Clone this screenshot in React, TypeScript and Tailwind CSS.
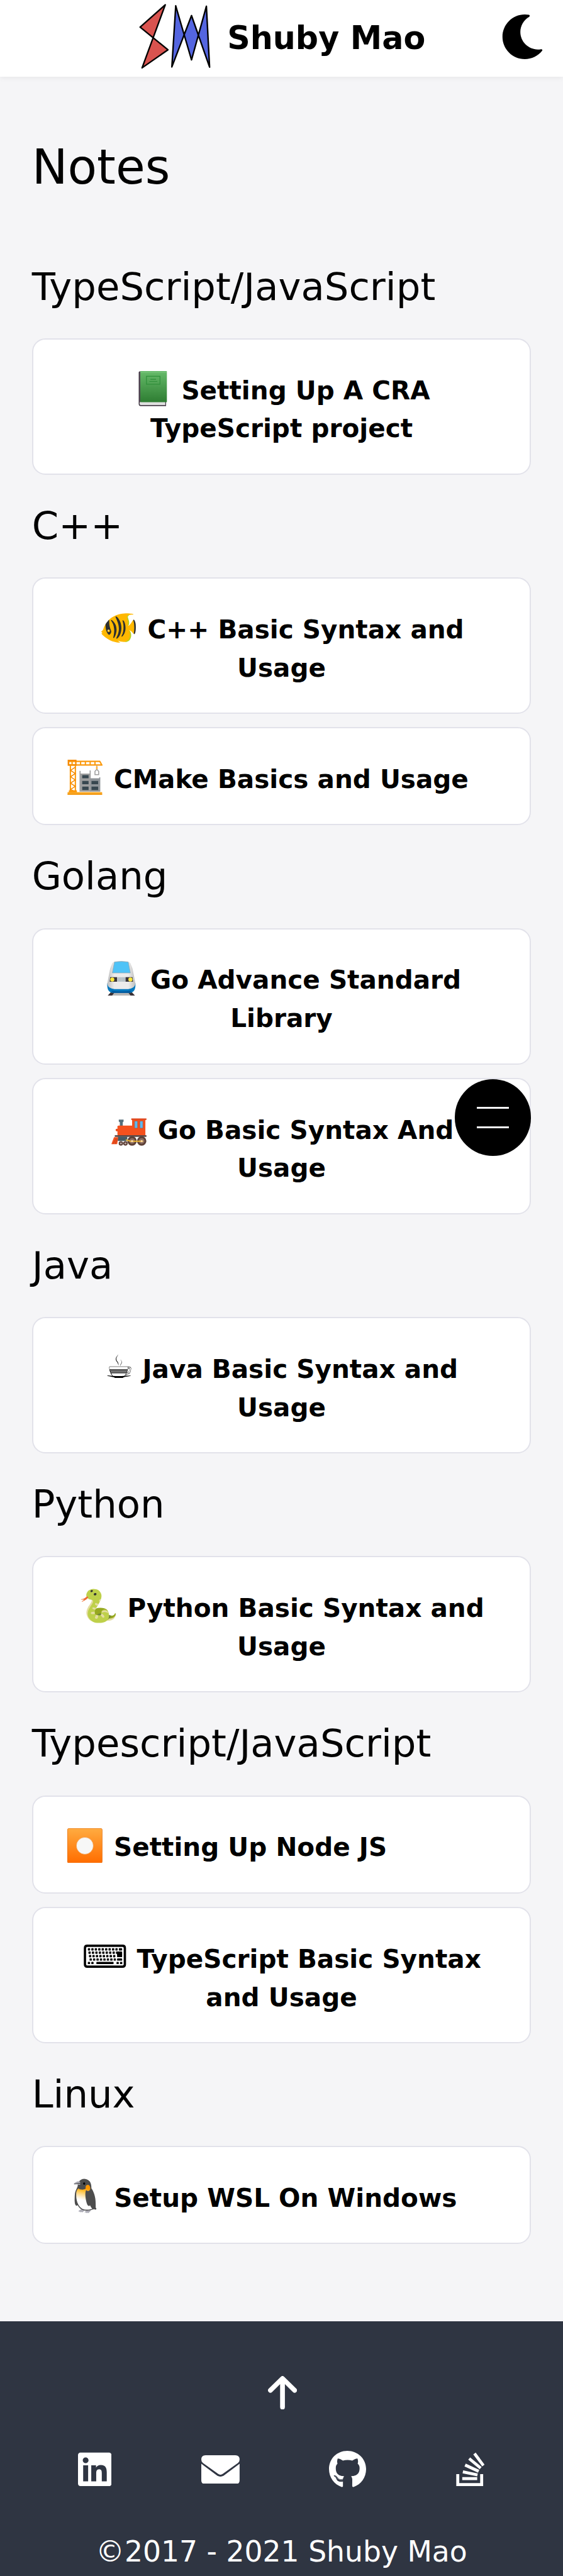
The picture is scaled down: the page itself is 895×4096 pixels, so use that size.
import type { ReactNode } from "react";
import { FaGithub, FaLinkedin, FaMoon, FaStackOverflow } from "react-icons/fa";

function Glyph({ children }: { children: ReactNode }) {
  return <span className="text-[50.7px] leading-[0]">{children}</span>;
}

function Pictogram({ children }: { children: ReactNode }) {
  return (
    <svg viewBox="0 0 66 66" className="mx-[3.6px] -mt-[20px] inline-block size-[55.8px] align-[-11px]">
      {children}
    </svg>
  );
}

function BookIcon() {
  return (
    <Pictogram>
      <defs>
        <linearGradient id="book" x1="0" y1="0" x2="0" y2="1">
          <stop offset="0" stopColor="#66bb6a" />
          <stop offset="1" stopColor="#2e7d32" />
        </linearGradient>
      </defs>
      <path d="M8 0.5H10V65.5H9Q6.5 65 6.5 62V2.5Q6.5 1 8 0.5Z" fill="#4a404c" />
      <path d="M8 58H58V65.8H9.5Q7 65 7.5 61Z" fill="#4a404c" />
      <path d="M9 58H56.5V64H9.8Q8 63 8.2 60.5Z" fill="#e0e0e0" />
      <rect x="9.5" y="0" width="50" height="58.5" rx="0.8" fill="url(#book)" />
      <path d="M10 2.5H59" stroke="#8bcf8e" strokeWidth="0.8" />
      <rect x="21" y="9.8" width="25.5" height="15" fill="none" stroke="#2f8f3a" strokeWidth="1.4" />
      <path d="M28.5 15.5H39M26.5 19.5H41.5" stroke="#2f8f3a" strokeWidth="1.4" />
    </Pictogram>
  );
}

function CraneIcon() {
  return (
    <Pictogram>
      <path d="M23 21H25V26H42V20H44V60H23Z" fill="#9e9e9e" />
      <path d="M43 35H60V33H62V60H43Z" fill="#8f9498" />
      <path d="M28 29H40V35H28ZM28 40H40V46H28ZM45.500 40H58V46H45.500ZM28 50.500H40V57H28ZM45.500 50.500H58V57H45.500Z" fill="#37474f" />
      <path d="M55.500 11V16M55.500 18L52 22V28H59V22L55.500 18" fill="none" stroke="#9e9e9e" strokeWidth="1.800" />
      <path d="M55.500 13V18" stroke="#fbb03b" strokeWidth="3" />
      <path d="M2.500 3H61L65 10H2.500Z" fill="#fff" stroke="#fb9a0e" strokeWidth="2.600" strokeLinejoin="round" />
      <path d="M2 1.300H16V10H2Z" fill="none" stroke="#f58a00" strokeWidth="2.600" />
      <path d="M9 3V10M25 3V10M34 3V10M43 3V10M52 3V10" stroke="#fb9a0e" strokeWidth="2.400" />
      <path d="M5.800 11V60M15.200 11V60" stroke="#fb9a0e" strokeWidth="2.400" />
      <path d="M15 14L6 20L15 26L6 32L15 38L6 44L15 50L6 56L15 60" fill="none" stroke="#f58a00" strokeWidth="1.800" />
      <path d="M0.500 61H65.500V66H0.500Z" fill="#f9a825" />
      <path d="M3 57.500H18V61.500H3Z" fill="#fb9a0e" />
      <path d="M0.500 65H65.500" stroke="#ef8e00" strokeWidth="1.500" />
    </Pictogram>
  );
}

function TrainIcon() {
  return (
    <Pictogram>
      <defs>
        <linearGradient id="train" x1="0" y1="0" x2="1" y2="0">
          <stop offset="0" stopColor="#bdbdbd" />
          <stop offset="0.250" stopColor="#ececec" />
          <stop offset="0.750" stopColor="#ececec" />
          <stop offset="1" stopColor="#bdbdbd" />
        </linearGradient>
      </defs>
      <path d="M16 58H50L58 66H8Z" fill="#b5b5b5" />
      <path d="M14 58H21L15 66H6.500ZM45 58H52L59.500 66H51Z" fill="#3a3136" />
      <path d="M6.500 42Q5.500 60 18 60H48Q60.500 60 59.500 42Z" fill="#0277bd" />
      <path d="M14 56Q33 59 52 56Q50 60 46 60H20Q16 60 14 56Z" fill="#01579b" />
      <path d="M16 4Q18 0 33 0Q48 0 50 4Q55 14 56 24L59.500 43Q58 52 46 53H20Q8 52 6.500 43L10 24Q11 14 16 4Z" fill="url(#train)" />
      <path d="M20 2Q33 -0.500 46 2L50 22.500H16Z" fill="#4fc3f7" />
      <path d="M20 2Q33 -0.500 46 2L50 22.500H16Z" fill="none" stroke="#90a4ae" strokeWidth="0.900" />
      <path d="M12 30.500H25V39H11ZM41 30.500H54L55 39H41Z" fill="#37323a" />
      <path d="M27 30.500V39M29.500 30.500V39M32 30.500V39M34.500 30.500V39M37 30.500V39M39.500 30.500V39" stroke="#78909c" strokeWidth="1.100" />
      <circle cx="16" cy="34.800" r="3.800" fill="#ffeb3b" />
      <circle cx="50" cy="34.800" r="3.800" fill="#ffeb3b" />
    </Pictogram>
  );
}

function LocomotiveIcon() {
  return (
    <Pictogram>
      <path d="M14 17H23V20.500L21.500 22V29H16V22L14 20.500Z" fill="#546e7a" />
      <circle cx="10.500" cy="36.500" r="2.500" fill="#e64a19" />
      <rect x="11.500" y="28" width="29" height="19" rx="2" fill="#f4511e" />
      <path d="M39 17H64V47H39Z" fill="#f4511e" />
      <path d="M37.500 14.700H66V17.500H37.500Z" fill="#dd3f14" />
      <path d="M43.500 19.500H49.500V33H43.500ZM53.500 19.500H59.500V33H53.500Z" fill="#5bb8f0" stroke="#b9502f" strokeWidth="0.900" />
      <path d="M6.500 46H66V49.500H6.500Z" fill="#5d4a47" />
      <path d="M12 49H30V57H12Z" fill="#455a64" />
      <path d="M5 50H13L11 63H0Z" fill="#f4511e" />
      <path d="M3 63L9 52M7 63L11 53" stroke="#b93814" strokeWidth="1" />
      <circle cx="39" cy="57" r="8.800" fill="#5d4037" />
      <circle cx="57" cy="57" r="8.800" fill="#5d4037" />
      <circle cx="39" cy="57" r="5.300" fill="#8d6e63" />
      <circle cx="57" cy="57" r="5.300" fill="#8d6e63" />
      <circle cx="18" cy="61.600" r="4.200" fill="#5d4037" />
      <circle cx="26.500" cy="61.600" r="4.200" fill="#5d4037" />
      <circle cx="18" cy="61.600" r="1.800" fill="#bcaaa4" />
      <circle cx="26.500" cy="61.600" r="1.800" fill="#bcaaa4" />
      <path d="M28 55L36 57.500H59" fill="none" stroke="#fbc02d" strokeWidth="2" strokeLinecap="round" />
      <circle cx="39" cy="57.300" r="2" fill="#ffd9a0" />
      <circle cx="57" cy="57.300" r="2" fill="#ffd9a0" />
    </Pictogram>
  );
}

function RecordIcon() {
  return (
    <Pictogram>
      <defs>
        <linearGradient id="record" x1="0" y1="0" x2="0" y2="1">
          <stop offset="0" stopColor="#ffab40" />
          <stop offset="1" stopColor="#ff6d00" />
        </linearGradient>
      </defs>
      <rect width="66" height="66" rx="3.500" fill="#e0690c" />
      <rect x="0.700" y="0.700" width="64.600" height="64" rx="3" fill="url(#record)" />
      <circle cx="33" cy="33" r="16" fill="#f7f7f7" stroke="#ef8a2c" strokeWidth="0.700" />
    </Pictogram>
  );
}

type Note = { icon: ReactNode; lines: string[] };
type Section = { title: string; notes: Note[] };

const sections: Section[] = [
  { title: "TypeScript/JavaScript", notes: [{ icon: <BookIcon />, lines: ["Setting Up A CRA", "TypeScript project"] }] },
  {
    title: "C++",
    notes: [
      { icon: <Glyph>🐠</Glyph>, lines: ["C++ Basic Syntax and", "Usage"] },
      { icon: <CraneIcon />, lines: ["CMake Basics and Usage"] },
    ],
  },
  {
    title: "Golang",
    notes: [
      { icon: <TrainIcon />, lines: ["Go Advance Standard", "Library"] },
      { icon: <LocomotiveIcon />, lines: ["Go Basic Syntax And", "Usage"] },
    ],
  },
  { title: "Java", notes: [{ icon: <Glyph>{"☕\uFE0E"}</Glyph>, lines: ["Java Basic Syntax and", "Usage"] }] },
  { title: "Python", notes: [{ icon: <Glyph>🐍</Glyph>, lines: ["Python Basic Syntax and", "Usage"] }] },
  {
    title: "Typescript/JavaScript",
    notes: [
      { icon: <RecordIcon />, lines: ["Setting Up Node JS"] },
      { icon: <Glyph>⌨</Glyph>, lines: ["TypeScript Basic Syntax", "and Usage"] },
    ],
  },
  { title: "Linux", notes: [{ icon: <Glyph>🐧</Glyph>, lines: ["Setup WSL On Windows"] }] },
];

function Logo() {
  return (
    <svg
      viewBox="255 0 147 138"
      className="h-[116.6px] w-[124.2px] self-start"
      stroke="#000"
      strokeWidth="2.8"
      strokeLinejoin="round"
    >
      <path d="M310.3 9L263 51L315.3 93.7L266.7 127.7Z" fill="#d9534f" />
      <path d="M330 11L359.7 112.7L387.7 11.7L393.7 126.3L359.7 29.3L322.7 126Z" fill="#5465e0" />
    </svg>
  );
}

function NoteCard({ note }: { note: Note }) {
  const [first, second] = note.lines;
  return (
    <a
      className={
        second
          ? "block h-[217px] rounded-[21px] border-2 border-[#e2e2ea] bg-white px-[48.7px] pt-[50.9px]"
          : "block h-[156.2px] rounded-[21px] border-2 border-[#e2e2ea] bg-white pt-[50.9px] pl-[51.2px]"
      }
    >
      <h3
        className={
          second
            ? "text-center text-[40.56px] leading-[60.8px] font-bold whitespace-nowrap"
            : "text-[40.56px] leading-[60.8px] font-bold whitespace-nowrap"
        }
      >
        {note.icon} {first}
        {second && (
          <>
            <br />
            {second}
          </>
        )}
      </h3>
    </a>
  );
}

export default function App() {
  return (
    <div className="relative flex h-[4096px] w-[895px] flex-col overflow-hidden bg-[#f5f5f7] font-['DejaVu_Sans','Noto_Color_Emoji',sans-serif] text-black">
      <header className="flex h-[121.7px] shrink-0 items-center bg-white pl-[215.5px] shadow-[0_2px_8px_rgba(0,0,0,0.06)]">
        <Logo />
        <span className="mt-[1px] ml-[21.5px] text-[50.7px] font-bold">Shuby Mao</span>
        <FaMoon className="mr-[29px] mb-[5.6px] ml-auto size-[71px]" />
      </header>
      <main className="px-[50.7px]">
        <h1 className="pt-[87px] pb-[51.7px] text-[76.05px] leading-[114px]">Notes</h1>
        {sections.map((s) => (
          <section key={s.title}>
            <h2 className="flex h-[163.3px] items-center text-[60.84px] leading-none">{s.title}</h2>
            <div className="flex flex-col gap-[21.1px]">
              {s.notes.map((n) => (
                <NoteCard key={n.lines[0]} note={n} />
              ))}
            </div>
          </section>
        ))}
      </main>
      <footer className="mt-auto flex h-[405.4px] shrink-0 flex-col items-center bg-[#2f3542] text-white">
        <svg
          viewBox="0 0 54.7 63.2"
          className="mt-[87.4px] ml-[3px] h-[53.4px] w-[46.2px] shrink-0"
          fill="none"
          stroke="currentColor"
          strokeWidth="9"
          strokeLinecap="round"
          strokeLinejoin="round"
        >
          <path d="M27.35 58.6V6M4.6 26.9L27.35 4.6L50.1 26.9" />
        </svg>
        <div className="mt-[64.6px] flex w-full shrink-0 items-center justify-between pr-[124.5px] pl-[124px]">
          <FaLinkedin className="h-[60.9px] w-[53.3px]" />
          <svg viewBox="0 0 72 54" className="h-[45.7px] w-[60.9px]" fill="currentColor">
            <path d="M8 0H64Q72 0 72 8Q72 12.500 69 14.500L40.500 35Q36 38 31.500 35L3 14.500Q0 12.500 0 8Q0 0 8 0Z" />
            <path d="M0 16L30 38.500Q36 42 42 38.500L72 16V47Q72 54 65 54H7Q0 54 0 47Z" />
          </svg>
          <FaGithub className="h-[60.9px] w-[59px]" />
          <FaStackOverflow className="h-[60.9px] w-[45.7px]" />
        </div>
        <p className="mt-[66.9px] text-[45.63px] leading-[68px] whitespace-nowrap">©2017 - 2021 Shuby Mao</p>
      </footer>
      <button className="absolute top-[1716.4px] left-[722.5px] flex size-[121.7px] flex-col items-center justify-center gap-[27.5px] rounded-full bg-black">
        <span className="h-[3px] w-[51px] bg-[#f5f5f7]" />
        <span className="h-[3px] w-[51px] bg-[#f5f5f7]" />
      </button>
    </div>
  );
}
